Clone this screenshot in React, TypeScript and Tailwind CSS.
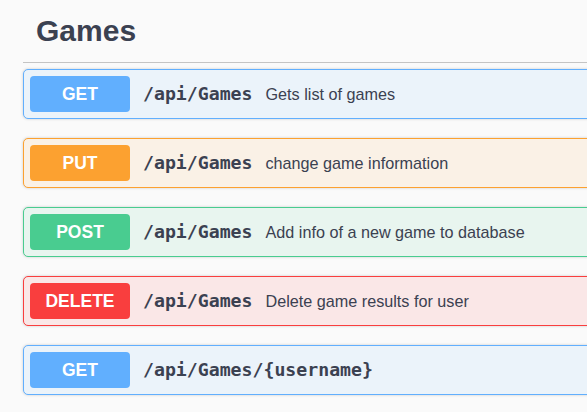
const ops = [
  {
    method: 'GET',
    path: '/api/Games',
    summary: 'Gets list of games',
    block: 'border-[#61affe] bg-[#ebf3fa]',
    badge: 'bg-[#61affe]',
  },
  {
    method: 'PUT',
    path: '/api/Games',
    summary: 'change game information',
    block: 'border-[#fca130] bg-[#faf1e6]',
    badge: 'bg-[#fca130]',
  },
  {
    method: 'POST',
    path: '/api/Games',
    summary: 'Add info of a new game to database',
    block: 'border-[#49cc90] bg-[#e8f5ef]',
    badge: 'bg-[#49cc90]',
  },
  {
    method: 'DELETE',
    path: '/api/Games',
    summary: 'Delete game results for user',
    block: 'border-[#f93e3e] bg-[#fae7e7]',
    badge: 'bg-[#f93e3e]',
  },
  {
    method: 'GET',
    path: '/api/Games/{username}',
    summary: '',
    block: 'border-[#61affe] bg-[#ebf3fa]',
    badge: 'bg-[#61affe]',
  },
];

export default function App() {
  return (
    <div className="w-[587px] h-[412px] overflow-hidden bg-[#fafafa] text-[#3b4151] font-['Liberation_Sans',Arial,sans-serif]">
      <div className="ml-[23px] w-[620px]">
        {/* ─── Tag header ─── */}
        <h4 className="pt-[14px] pb-[14px] pl-[13px] text-[30px] leading-[34px] font-bold border-b border-[#c4c4c4]">
          Games
        </h4>

        {/* ─── Operations ─── */}
        <div className="mt-[6px] flex flex-col gap-[19px]">
          {ops.map((op, i) => (
            <div
              key={i}
              className={`h-[50px] flex items-center gap-[13px] border rounded-[5px] px-[6px] shadow-[0_0_3px_rgba(0,0,0,0.19)] ${op.block}`}
            >
              <span
                className={`w-[100px] h-[36px] shrink-0 flex items-center justify-center rounded-[4px] text-white text-[17.5px] font-bold ${op.badge}`}
              >
                {op.method}
              </span>
              <span className="font-['DejaVu_Sans_Mono',monospace] text-[18.2px] font-bold">
                {op.path}
              </span>
              {op.summary && (
                <span className="text-[16.2px] mt-[1px]">{op.summary}</span>
              )}
            </div>
          ))}
        </div>
      </div>
    </div>
  );
}
